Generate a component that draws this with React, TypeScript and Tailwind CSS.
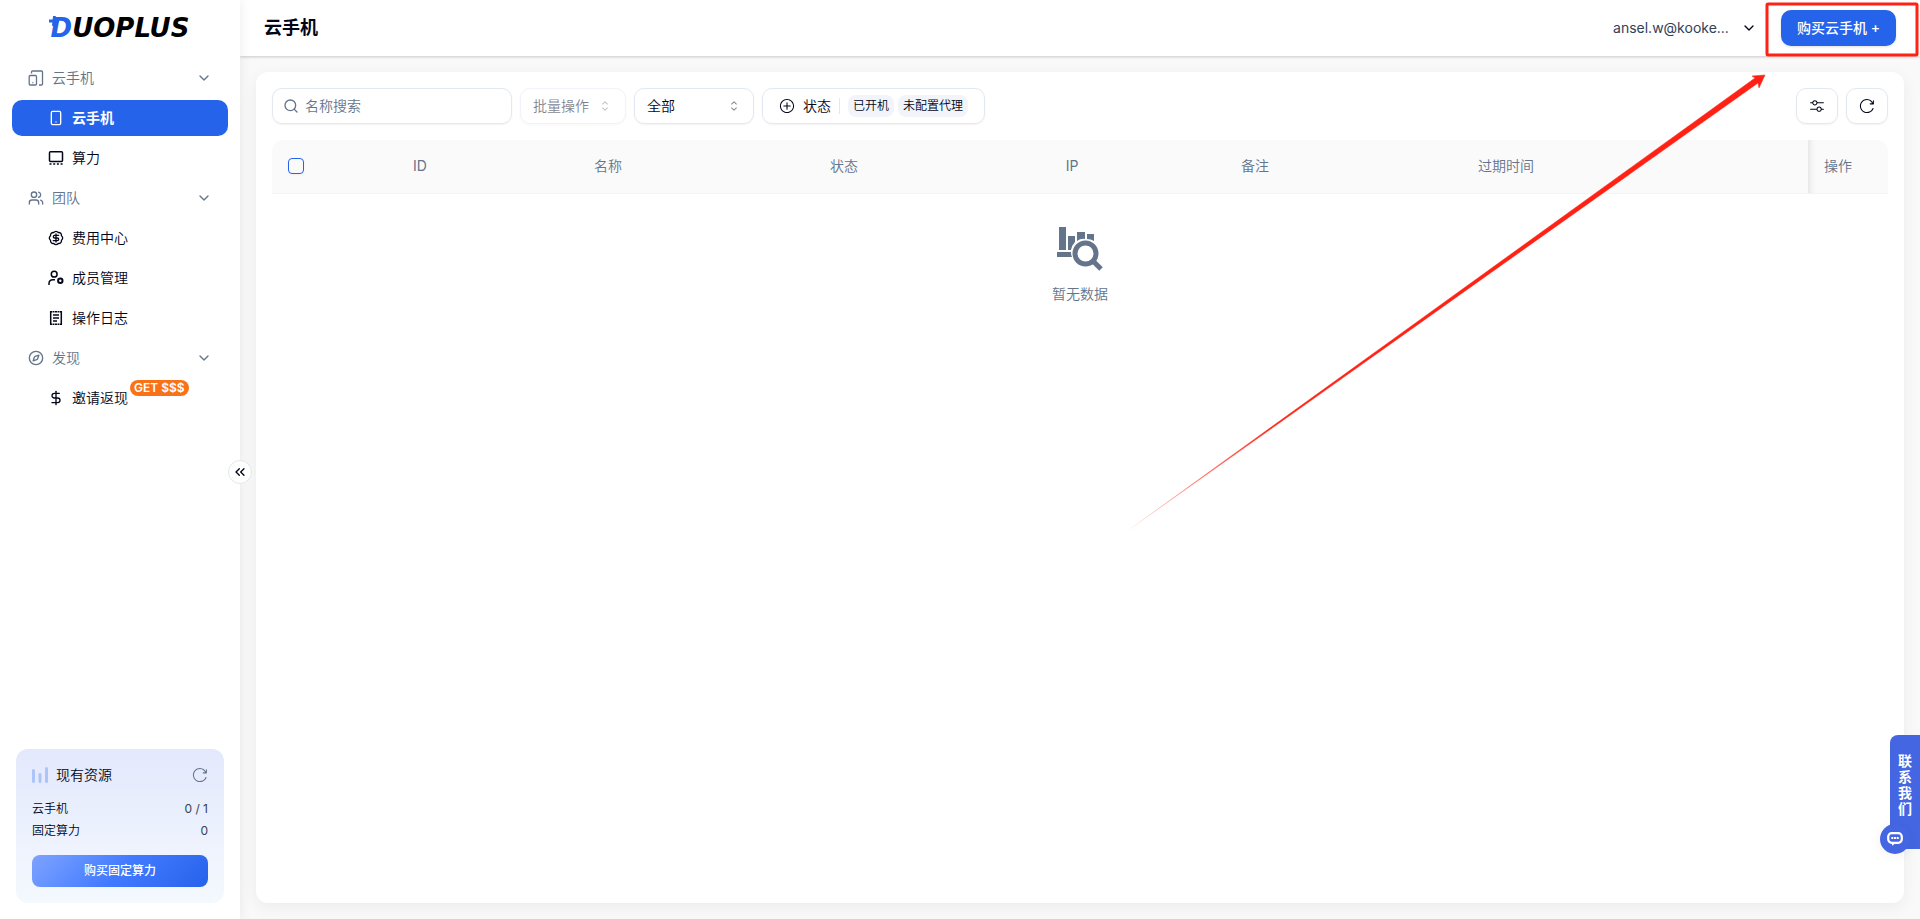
import * as React from "react";
import {
  BadgeDollarSign,
  ChevronDown,
  ChevronsLeft,
  Compass,
  DollarSign,
  Search,
  Smartphone,
  Users,
} from "lucide-react";
import {
  RxCaretSort,
  RxMixerHorizontal,
  RxPlusCircled,
  RxReload,
} from "react-icons/rx";

type IconProps = { className?: string };

function DevicesIcon({ className }: IconProps) {
  return (
    <svg viewBox="0 0 16 16" fill="none" stroke="currentColor" strokeWidth="1.3" className={className} aria-hidden="true">
      <path d="M3.5 3.5V2a1 1 0 0 1 1-1h9a1 1 0 0 1 1 1v12a1 1 0 0 1-1 1H11" />
      <rect x="1.2" y="5.5" width="7.3" height="9.5" rx="1" />
      <path d="M4.8 12.3v1" />
    </svg>
  );
}

function ComputeIcon({ className }: IconProps) {
  return (
    <svg viewBox="0 0 16 16" fill="none" stroke="currentColor" strokeWidth="1.5" className={className} aria-hidden="true">
      <rect x="1.5" y="1.7" width="13" height="9.8" rx="1" />
      <path d="M1.5 14h2M5.2 14h2M8.9 14h2M12.6 14h2" />
    </svg>
  );
}

function MemberIcon({ className }: IconProps) {
  return (
    <svg viewBox="0 0 16 16" fill="none" stroke="currentColor" strokeWidth="1.5" className={className} aria-hidden="true">
      <circle cx="6.2" cy="4.2" r="2.9" />
      <path d="M1 15v-1.5c0-2.3 1.7-3.8 4-3.8h2" />
      <circle cx="12.3" cy="10.8" r="2.2" strokeWidth="2" />
    </svg>
  );
}

function LogIcon({ className }: IconProps) {
  return (
    <svg viewBox="0 0 16 16" fill="none" stroke="currentColor" strokeWidth="1.5" className={className} aria-hidden="true">
      <path d="M2.7 1v14M13.3 1v14" />
      <path d="M2 1.7h12M2 14.3h12" strokeDasharray="2 .5" />
      <path d="M5 5h6M5 8h6M5 11h4" />
    </svg>
  );
}

function EmptyIcon({ className }: IconProps) {
  return (
    <svg viewBox="0 0 48 48" fill="currentColor" className={className} aria-hidden="true">
      <path d="M3 1h7v23H3zM12 10h7v6q-3 3-4 8h-3zM21 6h8v7q-4-1-8 2zM31 8h7v7q-3-2-7-2zM1 26h14q0 3 1 5H1z" />
      <circle cx="29.5" cy="27.5" r="10.5" fill="none" stroke="currentColor" strokeWidth="5" />
      <path d="m37 35 8 8" stroke="currentColor" strokeWidth="5" />
    </svg>
  );
}

function ChatIcon({ className }: IconProps) {
  return (
    <svg viewBox="0 0 16 14" className={className} aria-hidden="true">
      <rect x="1.2" y="1.2" width="13.6" height="9.6" rx="3.5" fill="none" stroke="white" strokeWidth="2.2" />
      <path d="M4.5 11h4l-3 2.8z" fill="white" />
      <path d="M4.3 6h2M7 6h2M9.7 6h2" stroke="white" strokeWidth="2" />
    </svg>
  );
}

type NavItem = {
  label: string;
  icon: React.ComponentType<IconProps>;
  active?: boolean;
  badge?: string;
};

const groups: { label: string; icon: React.ComponentType<IconProps>; items: NavItem[] }[] = [
  {
    label: "云手机",
    icon: DevicesIcon,
    items: [
      { label: "云手机", icon: Smartphone, active: true },
      { label: "算力", icon: ComputeIcon },
    ],
  },
  {
    label: "团队",
    icon: Users,
    items: [
      { label: "费用中心", icon: BadgeDollarSign },
      { label: "成员管理", icon: MemberIcon },
      { label: "操作日志", icon: LogIcon },
    ],
  },
  {
    label: "发现",
    icon: Compass,
    items: [{ label: "邀请返现", icon: DollarSign, badge: "GET $$$" }],
  },
];

const columns = [
  { label: "ID", width: "w-[200px]" },
  { label: "名称", width: "w-[176px]" },
  { label: "状态", width: "w-[296px]" },
  { label: "IP", width: "w-[160px]" },
  { label: "备注", width: "w-[206px]" },
  { label: "过期时间", width: "w-[296px]" },
];

function Logo() {
  return (
    <a
      href="#"
      className="relative font-['DejaVu_Sans',sans-serif] text-[26px] leading-6 font-bold italic text-black"
    >
      <span className="text-[#2563eb]">D</span>UOPLUS
      {/* plus sign that crosses the corner of the D */}
      <svg viewBox="0 0 10 10" className="absolute top-0 -left-0.5 size-2.5" stroke="#2563eb" strokeWidth="3" aria-hidden="true">
        <path d="M0 5h10M5.5 0l-1 10" />
      </svg>
    </a>
  );
}

function Sidebar() {
  return (
    <aside className="relative z-10 flex w-60 shrink-0 flex-col bg-white shadow-[0_0_12px_rgba(0,0,0,0.08)]">
      <div className="flex h-14 items-center justify-center">
        <Logo />
      </div>
      <nav className="flex flex-col gap-1 px-3 pt-1">
        {groups.map((group) => (
          <React.Fragment key={group.label}>
            <button className="flex h-9 items-center gap-2 px-4 text-sm text-[#64748b]">
              <group.icon className="size-4" />
              {group.label}
              <ChevronDown className="ml-auto size-4" />
            </button>
            {group.items.map((item) => (
              <a
                key={item.label}
                href="#"
                className={
                  item.active
                    ? "flex h-9 items-center gap-2 rounded-[10px] bg-[#2563eb] pl-9 font-[Inter,'Noto_Sans_CJK_SC',sans-serif] text-sm font-bold text-white"
                    : "flex h-9 items-center gap-2 rounded-[10px] pl-9 text-sm text-slate-950"
                }
              >
                <item.icon className="size-4" />
                <span className="relative">
                  {item.label}
                  {item.badge && (
                    <span className="absolute -top-2 left-full ml-0.5 rounded-full bg-[#f97316] px-1 text-xs leading-4 font-semibold whitespace-nowrap text-white">
                      {item.badge}
                    </span>
                  )}
                </span>
              </a>
            ))}
          </React.Fragment>
        ))}
      </nav>
      <section className="m-4 mt-auto rounded-xl bg-linear-to-b from-[#e3e8fc] to-[#f4f9fe] p-4">
        <div className="flex items-center text-sm text-slate-950">
          <svg viewBox="0 0 16 16" className="mr-2 size-4" stroke="#abc4fb" strokeWidth="3" strokeLinecap="round" aria-hidden="true">
            <path d="M1.5 3.5v11M8 7.500v7M14.5 1.5v13" />
          </svg>
          现有资源
          <button aria-label="刷新资源" className="ml-auto text-[#64748b]">
            <RxReload className="size-4" />
          </button>
        </div>
        <dl className="mt-[15px] flex flex-col gap-1 text-xs leading-[18px] text-slate-950">
          <div className="flex justify-between">
            <dt>云手机</dt>
            <dd className="text-slate-700">0 / 1</dd>
          </div>
          <div className="flex justify-between">
            <dt>固定算力</dt>
            <dd className="text-slate-700">0</dd>
          </div>
        </dl>
        <button className="mt-[15px] h-8 w-full rounded-lg bg-linear-135 from-[#7ea3ff] via-[#427aff] to-[#2563eb] font-[Inter,'Noto_Sans_CJK_SC',sans-serif] text-xs font-medium text-white">
          购买固定算力
        </button>
      </section>
      <button
        aria-label="收起侧边栏"
        className="absolute top-1/2 -right-3 flex size-6 items-center justify-center rounded-full border border-slate-200 bg-white text-slate-950"
      >
        <ChevronsLeft className="size-4" />
      </button>
    </aside>
  );
}

function Header() {
  return (
    <header className="flex h-14 shrink-0 items-center bg-white px-6 shadow-[0_1px_3px_rgba(0,0,0,0.2)]">
      <h1 className="font-[Inter,'Noto_Sans_CJK_SC',sans-serif] text-lg font-bold text-slate-950">云手机</h1>
      <button className="ml-auto flex items-center gap-3 text-sm text-slate-700">
        ansel.w@kooke...
        <ChevronDown className="size-4 text-slate-950" />
      </button>
      <button className="ml-6 h-9 rounded-[10px] bg-[#2563eb] px-4 font-[Inter,'Noto_Sans_CJK_SC',sans-serif] text-sm font-medium text-white shadow-sm">
        购买云手机 +
      </button>
    </header>
  );
}

function Toolbar() {
  return (
    <div className="flex items-center gap-2 text-sm text-slate-950">
      <label className="flex h-9 w-60 items-center gap-1.5 rounded-[10px] border border-slate-200 px-2.5 shadow-xs">
        <Search className="size-4 text-[#64748b]" />
        <input
          type="text"
          aria-label="名称搜索"
          placeholder="名称搜索"
          className="min-w-0 flex-1 outline-none placeholder:text-[#64748b]"
        />
      </label>
      <button
        disabled
        className="flex h-9 items-center gap-2 rounded-[10px] border border-slate-200 px-3 opacity-50 shadow-xs"
      >
        批量操作
        <RxCaretSort className="size-4 opacity-50" />
      </button>
      <div className="relative">
        <select
          aria-label="分组"
          className="h-9 w-[120px] appearance-none rounded-[10px] border border-slate-200 px-3 shadow-xs"
        >
          <option>全部</option>
        </select>
        <RxCaretSort className="pointer-events-none absolute top-2.5 right-3 size-4 opacity-50" />
      </div>
      <button className="flex h-9 items-center rounded-[10px] border border-slate-200 px-4 shadow-xs">
        <RxPlusCircled className="mr-2 size-4" />
        状态
        <span className="mx-2 h-4 w-px bg-slate-200" />
        <span className="flex gap-1 text-xs">
          <span className="rounded-lg bg-slate-100 px-[5px] py-0.5 leading-[18px]">已开机</span>
          <span className="rounded-lg bg-slate-100 px-[5px] py-0.5 leading-[18px]">未配置代理</span>
        </span>
      </button>
      <button
        aria-label="列设置"
        className="ml-auto flex h-9 w-[42px] items-center justify-center rounded-[10px] border border-slate-200 shadow-xs"
      >
        <RxMixerHorizontal className="size-4" />
      </button>
      <button
        aria-label="刷新"
        className="flex h-9 w-[42px] items-center justify-center rounded-[10px] border border-slate-200 shadow-xs"
      >
        <RxReload className="size-4" />
      </button>
    </div>
  );
}

function PhoneTable() {
  return (
    <div className="mt-4 overflow-hidden rounded-t-xl">
      <table className="w-full table-fixed text-sm text-[#64748b]">
        <thead>
          <tr className="h-[53px] border-b border-slate-100 bg-[#fafafa]">
            <th className="w-12 pl-4 text-left">
              <input
                type="checkbox"
                aria-label="全选"
                className="block size-4 appearance-none rounded-sm border border-[#2563eb] shadow-xs"
              />
            </th>
            {columns.map((column) => (
              <th key={column.label} className={`${column.width} font-normal`}>
                {column.label}
              </th>
            ))}
            <th className="w-[154px]" />
            <th className="w-20 pl-4 text-left font-normal shadow-[inset_8px_0_8px_-8px_rgba(0,0,0,0.15)]">
              操作
            </th>
          </tr>
        </thead>
        <tbody>
          <tr>
            <td colSpan={9} className="pt-8">
              <div className="flex flex-col items-center gap-2.5">
                <EmptyIcon className="size-12" />
                暂无数据
              </div>
            </td>
          </tr>
        </tbody>
      </table>
    </div>
  );
}

function ContactTab() {
  return (
    <a
      href="#"
      className="fixed right-0 bottom-[70px] flex h-[114px] w-[30px] flex-col items-center rounded-tl-lg bg-[#4466e2] pt-[18px] font-[Inter,'Noto_Sans_CJK_SC',sans-serif] text-sm leading-4 font-bold text-white"
    >
      <span className="w-4 text-center">联系我们</span>
      <span className="absolute -bottom-[5px] -left-2.5 flex size-[30px] items-center justify-center rounded-full bg-[#4466e2] shadow-[0_2px_12px_rgba(0,0,0,0.06)]">
        <ChatIcon className="h-3.5 w-4" />
      </span>
    </a>
  );
}

// Red frame and arrow pointing at the purchase button
function Callout() {
  return (
    <svg
      viewBox="0 0 800 540"
      className="pointer-events-none fixed top-0 right-0 z-20 h-[540px] w-[800px]"
      aria-hidden="true"
    >
      <defs>
        <linearGradient id="arrow" gradientUnits="userSpaceOnUse" x1="10" y1="529" x2="150" y2="428">
          <stop offset="0" stopColor="#ff2214" stopOpacity="0.05" />
          <stop offset="1" stopColor="#ff2214" />
        </linearGradient>
      </defs>
      <rect x="647" y="4" width="150" height="51" rx="1" fill="none" stroke="#ff2214" strokeWidth="3" />
      <path d="M10 529 635 78l-3-2 13-1-6 13-1-5z" fill="url(#arrow)" stroke="url(#arrow)" strokeWidth="0.5" />
    </svg>
  );
}

export default function App() {
  return (
    <div className="flex min-h-screen bg-[#f9f9f9] font-[Inter,'Noto_Sans_CJK_SC_DemiLight','Noto_Sans_CJK_SC',sans-serif]">
      <Sidebar />
      <div className="flex min-w-0 flex-1 flex-col">
        <Header />
        <main className="m-4 flex-1 rounded-xl bg-white p-4 shadow-[0_4px_16px_rgba(0,0,0,0.06)]">
          <Toolbar />
          <PhoneTable />
        </main>
      </div>
      <ContactTab />
      <Callout />
    </div>
  );
}
